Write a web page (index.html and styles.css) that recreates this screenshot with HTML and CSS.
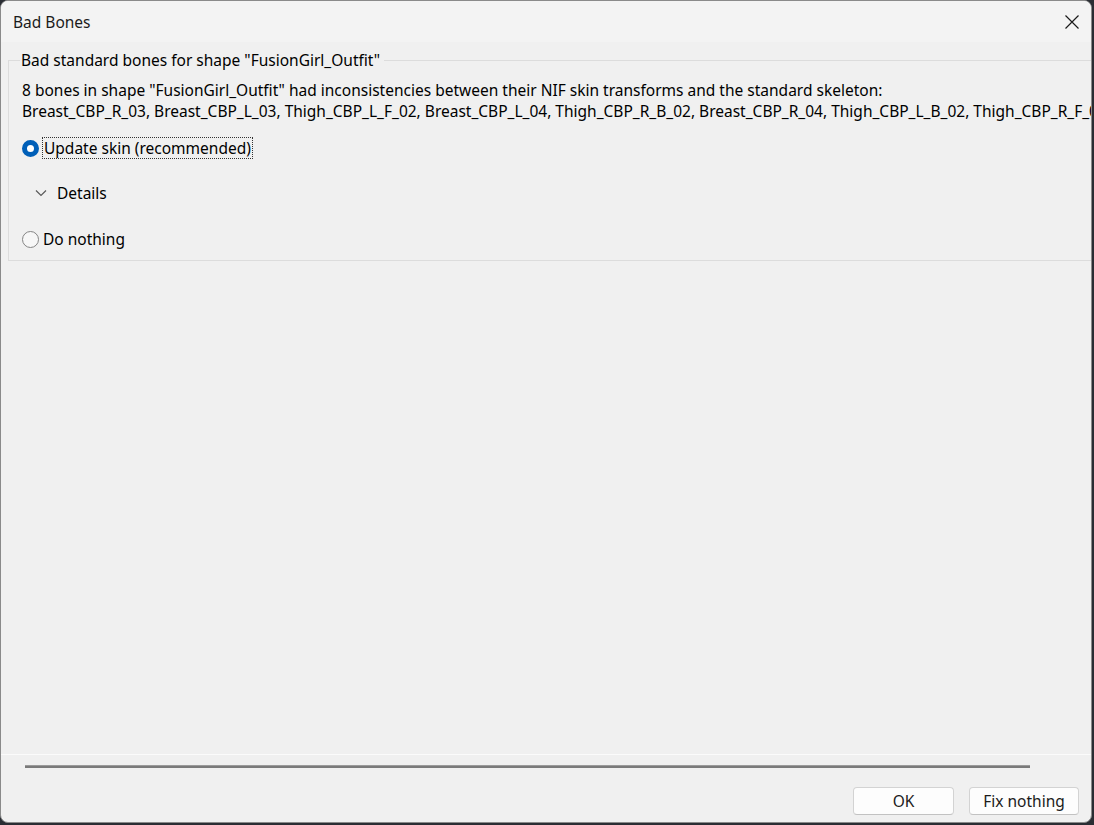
FILE: index.html
```html
<!DOCTYPE html>
<html>
<head>
<meta charset="utf-8">
<link rel="stylesheet" href="styles.css">
</head>
<body>
<div class="window">
  <div class="titlebar">
    <span class="title">Bad Bones</span>
    <svg class="close" width="16" height="16" viewBox="0 0 16 16"><path d="M1.5 1.5 L14.5 14.5 M14.5 1.5 L1.5 14.5" stroke="#1a1a1a" stroke-width="1.2" fill="none"/></svg>
  </div>
  <div class="content">
    <fieldset class="group">
      <legend>Bad standard bones for shape "FusionGirl_Outfit"</legend>
      <div class="msg first">8 bones in shape "FusionGirl_Outfit" had inconsistencies between their NIF skin transforms and the standard skeleton:</div>
      <div class="msg">Breast_CBP_R_03, Breast_CBP_L_03, Thigh_CBP_L_F_02, Breast_CBP_L_04, Thigh_CBP_R_B_02, Breast_CBP_R_04, Thigh_CBP_L_B_02, Thigh_CBP_R_F_02</div>
      <div class="radio-row first">
        <span class="radio checked"></span>
        <span class="focus">Update skin (recommended)</span>
      </div>
      <div class="details-row">
        <svg class="chev" width="12" height="8" viewBox="0 0 12 8"><path d="M1 1.5 L6 6.5 L11 1.5" stroke="#5a5a5a" stroke-width="1.2" fill="none"/></svg>
        <span>Details</span>
      </div>
      <div class="radio-row last">
        <span class="radio"></span>
        <span class="label">Do nothing</span>
      </div>
    </fieldset>
    <div class="spacer"></div>
    <div class="sepline"></div>
    <div class="gauge-row"><div class="gauge"></div></div>
    <div class="buttons">
      <button class="btn ok">OK</button>
      <button class="btn fix">Fix nothing</button>
    </div>
  </div>
</div>
</body>
</html>
```
FILE: styles.css
```css
html, body {
  margin: 0;
  padding: 0;
  background: #2a2d33;
  width: 1094px;
  height: 825px;
  overflow: hidden;
}
body {
  font-family: "Noto Sans", "Open Sans", sans-serif;
  font-size: 15.5px;
  color: #000;
}
.window {
  box-sizing: border-box;
  width: 1092px;
  height: 823px;
  margin: 0;
  border: 1px solid #8a8a8a;
  border-radius: 8px;
  background: #f0f0f0;
  overflow: hidden;
  display: flex;
  flex-direction: column;
}
.titlebar {
  height: 41px;
  flex: none;
  background: #f3f3f3;
  display: flex;
  align-items: center;
  justify-content: space-between;
  padding: 0 11px 0 12px;
}
.title {
  font-size: 15.5px;
  line-height: 20px;
  color: #1b1b1b;
}
.close {
  display: block;
}
.content {
  flex: 1;
  display: flex;
  flex-direction: column;
  min-height: 0;
}
.group {
  margin: 8px -40px 0 7px;
  border: 1px solid #dcdcdc;
  padding: 0 0 10px 13px;
  box-sizing: border-box;
  min-width: 0;
}
.group legend {
  padding: 0 4px 0 1px;
  margin-left: -2px;
  line-height: 20px;
}
.msg {
  line-height: 21px;
  white-space: nowrap;
}
.msg.first {
  margin-top: 10px;
}
.radio-row {
  display: flex;
  align-items: center;
  height: 22px;
}
.radio-row.first {
  margin-top: 15px;
}
.radio-row.last {
  margin-top: 24px;
}
.radio {
  width: 17px;
  height: 17px;
  box-sizing: border-box;
  border-radius: 50%;
  border: 1px solid #858585;
  background: #f7f7f7;
  flex: none;
  margin-right: 4px;
}
.radio.checked {
  border: 5px solid #005fb8;
  background: #fff;
}
.focus {
  outline: 1px dotted #333;
  outline-offset: 0;
  padding: 0 1px 0 1px;
  line-height: 20px;
}
.label {
  line-height: 20px;
}
.details-row {
  display: flex;
  align-items: center;
  height: 22px;
  margin-top: 23px;
  padding-left: 13px;
}
.chev {
  margin-right: 10px;
}
.spacer {
  flex: 1;
}
.sepline {
  height: 1px;
  background: #fbfbfb;
  flex: none;
}
.gauge-row {
  padding: 10px 0 0 24px;
  flex: none;
}
.gauge {
  width: 1005px;
  height: 3px;
  background: #7a7a7a;
  border-top: 1px solid #9a9a9a;
  box-sizing: border-box;
}
.buttons {
  display: flex;
  justify-content: flex-end;
  gap: 15px;
  padding: 19px 12px 7px 0;
  flex: none;
}
.btn {
  font-family: inherit;
  font-size: 15.5px;
  height: 28px;
  border: 1px solid #d3d3d3;
  border-bottom-color: #c2c2c2;
  border-radius: 4px;
  background: #fdfdfd;
  color: #1b1b1b;
  padding: 0;
}
.btn.ok { width: 101px; }
.btn.fix { width: 110px; }
```
